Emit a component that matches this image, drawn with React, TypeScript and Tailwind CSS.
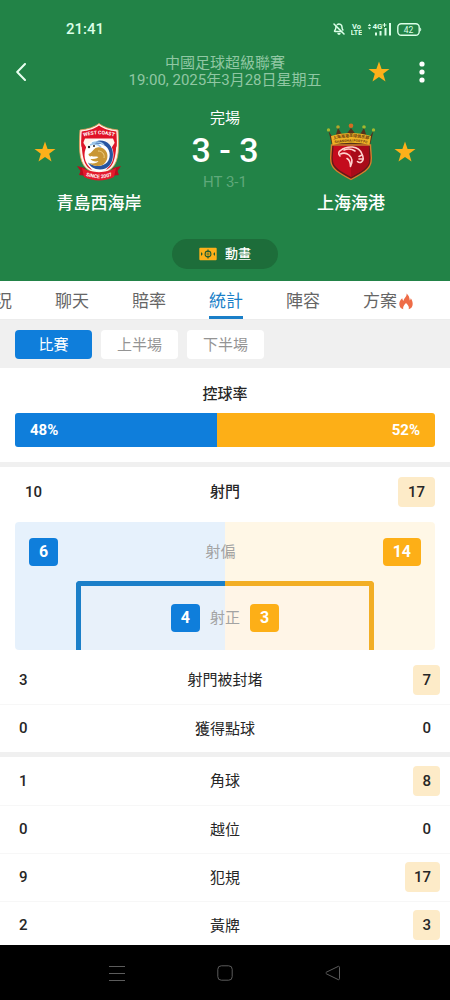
import { useState } from "react";
import { BellOff } from "lucide-react";
import clsx from "clsx";

interface Stat {
  label: string;
  home: number;
  away: number;
}

const TABS = ["賽況", "聊天", "賠率", "統計", "陣容", "方案"];
const PERIODS = ["比賽", "上半場", "下半場"];
const POSSESSION = { home: 48, away: 52 };

const SHOT_STATS: Stat[] = [
  { label: "射門被封堵", home: 3, away: 7 },
  { label: "獲得點球", home: 0, away: 0 },
];

const OTHER_STATS: Stat[] = [
  { label: "角球", home: 1, away: 8 },
  { label: "越位", home: 0, away: 0 },
  { label: "犯規", home: 9, away: 17 },
  { label: "黃牌", home: 2, away: 3 },
];

function StarIcon() {
  return (
    <svg viewBox="0 0 22 22" className="w-[22px] h-[22px]" fill="#fdb01a">
      <path d="M11 .6l2.6 7.3 7.9.2-6.3 4.7 2.3 7.6L11 15.9l-6.5 4.5 2.3-7.6L.5 8.1l7.9-.2z" />
    </svg>
  );
}

function FlameIcon() {
  return (
    <svg viewBox="0 0 14 17" className="w-[14px] h-[17px]" fill="#ee6c47">
      <path d="M7.600.400C8 2.500 6.500 4 5.300 5.700 4.700 6.500 4.500 7.300 4.500 8 3.800 7.300 3.300 6.400 3.200 5.200 1.300 6.900.300 8.800.300 10.900c0 2.600 1.500 4.600 4 5.400-.600-1.900.100-3.700 2.700-6.300 2.600 2.500 3.300 4.400 2.700 6.300 2.500-.800 4-2.800 4-5.400 0-2-.600-3.900-2-5.700-.100.900-.300 1.600-.900 2.200C10.600 4.700 9.700 2 7.600.400z" />
    </svg>
  );
}

function PitchIcon() {
  return (
    <svg viewBox="0 0 18 14" className="w-[18px] h-[14px]">
      <rect x=".3" y=".8" width="17.400" height="12.400" rx="1" fill="#fdb01a" />
      <g fill="none" stroke="#1f5c32" strokeWidth="1.100">
        <circle cx="9" cy="7" r="2.900" />
        <path d="M9 2.500v3M9 8.500v3M7.600 7h2.800" />
      </g>
      <path d="M2 5l1.800 2L2 9zM16 5l-1.800 2L16 9z" fill="#1f5c32" />
    </svg>
  );
}

function StatusIcons() {
  return (
    <div className="flex items-center gap-[5px] text-[#dcffe8]">
      <BellOff className="w-3 h-3 mr-px" strokeWidth={3} />
      <svg viewBox="0 0 11 14" className="w-[11px] h-[14px]" fill="currentColor">
        <text x="5.500" y="6.500" fontSize="7.500" fontWeight="700" textAnchor="middle">Vo</text>
        <text x="5.500" y="13.300" fontSize="7" fontWeight="700" textAnchor="middle">LTE</text>
      </svg>
      <svg viewBox="0 0 25 14" className="w-[25px] h-[14px]" fill="currentColor">
        <path d="M.8 4L2.500 1.800 4.200 4zM.8 5.500h3.400L2.500 7.500z" />
        <text x="5.500" y="6.500" fontSize="8" fontWeight="700">4G</text>
        <path d="M15.500 2.500h4v1h-4zM17 1h1v4h-1z" />
        <rect x="8" y="10.500" width="2" height="3" />
        <rect x="12.500" y="9" width="2" height="4.500" />
        <rect x="17.500" y="6" width="2" height="7.500" />
        <rect x="22" y="1" width="2" height="12.500" />
      </svg>
      <svg viewBox="0 0 25 13" className="w-[25px] h-[13px]">
        <rect x=".8" y=".8" width="21.400" height="11.400" rx="3.500" fill="none" stroke="currentColor" strokeWidth="1.400" />
        <path d="M23.200 4.500c1.400.6 1.400 3.400 0 4z" fill="currentColor" />
        <text x="11.500" y="9.500" fontSize="8.500" textAnchor="middle" fill="currentColor">42</text>
      </svg>
    </div>
  );
}

function WestCoastCrest() {
  return (
    <svg viewBox="0 0 46 58" className="w-[46px] h-[58px]">
      <path d="M23 .5c5 4 11 5.500 19 6.500 1 16 1.500 31-6 38-4 3.500-9 6-13 8-4-2-9-4.500-13-8C2.500 38 3 23 4 7 12 6 18 4.500 23 .5z" fill="#fff3ea" stroke="#e79a57" strokeWidth=".8" />
      <path d="M23 2.500c5 3.500 10 5 17.300 6 .5 6 .6 11 .3 16L37 15.500H9L5.400 24.500c-.3-5-.2-10 .3-16C13 7.500 18 6 23 2.500z" fill="#e01226" />
      <path d="M5.500 17L10 24c0 9 1 17 6 23-6-3-10-8-10.500-30zM40.500 17L36 24c0 9-1 17-6 23 6-3 10-8 10.500-30z" fill="#dd1528" />
      <ellipse cx="23" cy="32" rx="14.500" ry="16" fill="#fff" />
      <path d="M24 17.500c8 0 13 6 13 14 0 9-5 15-13 15-6 0-10-3-12-7 5 4 14 5 19 0 5-6 3-15-4-18-3-1-6-1-9 0 1-2 3-4 6-4z" fill="#2754a0" />
      <path d="M16 20c5-2 9-1 12 2M14 22c4-2 8-1 11 2" fill="none" stroke="#9cc6ea" strokeWidth="1.500" />
      <path d="M12.500 31c3-1 4-4 7-6 4-2 9 0 11 4s1 10-4 13c-5 2-10 1-13-2 4 1 8 0 9-2-3 1-7 0-8-2 3 0 6 0 8-2-3-1-5 0-7-1-1 1-3 0-3-2z" fill="#c99635" />
      <path d="M22 28c4 0 7 3 6 7" fill="none" stroke="#f0d083" />
      <circle cx="13" cy="24" r="1.200" fill="#222" />
      <circle cx="18" cy="23" r="1" fill="#222" />
      <path d="M1 43l8 2 2 8-8-1 1.500-4zM45 43l-8 2-2 8 8-1-1.500-4z" fill="#b80d1e" />
      <path d="M6 45c10 5.500 24 5.500 34 0l-2 9c-9 4.500-21 4.500-30 0z" fill="#e31a2c" />
      <path id="coast-top" d="M8 13.500Q23 9 38 13.500" fill="none" />
      <path id="coast-bottom" d="M9.500 52.500Q23 58 36.500 52.500" fill="none" />
      <text fontSize="5" fontWeight="700" fill="#fff" textAnchor="middle">
        <textPath href="#coast-top" startOffset="50%">WEST COAST</textPath>
      </text>
      <text fontSize="5" fontWeight="700" fill="#fff" textAnchor="middle">
        <textPath href="#coast-bottom" startOffset="50%">SINCE 2007</textPath>
      </text>
    </svg>
  );
}

function PortCrest() {
  return (
    <svg viewBox="0 0 50 58" className="w-[50px] h-[58px]">
      <circle cx="2.500" cy="7" r="1.700" fill="#a3b92f" />
      <circle cx="12" cy="4" r="1.800" fill="#b4a62c" />
      <circle cx="25" cy="2.800" r="2.300" fill="#d56b22" />
      <circle cx="38" cy="4" r="1.800" fill="#a3b92f" />
      <circle cx="47.500" cy="7" r="1.700" fill="#a3b92f" />
      <path d="M2.500 8l4 6 3-1 2.500-8 4 6.500 4.500-.5L25 5l4.500 6 4.500.5L38 5l2.500 8 3 1 4-6-4 16h-37z" fill="#55301a" />
      <path d="M5.500 22h39c0 7 1.500 11 .5 17-.8 7-8 11-20 17.500C13 50 5.800 46 5 39c-1-6 .5-10 .5-17z" fill="#65191a" stroke="#d97e2c" strokeWidth="1.400" />
      <path d="M7.500 23h35c0 6 1.300 10 .5 15-.6 6-7 10-18 16C14 48 7.600 44 7 38c-.8-5 .5-9 .5-15z" fill="#c40c1d" />
      <path d="M25 23h17.500c0 6 1.300 10 .5 15-.6 6-7 10-18 16z" fill="#a90b19" />
      <path d="M5 13c13-4 27-4 40 0l-1.500 9c-12-3-25-3-37 0z" fill="#eeb125" />
      <path id="port-top" d="M7 16.500Q25 12 43 16.500" fill="none" />
      <path id="port-bottom" d="M8 20.500Q25 17 42 20.500" fill="none" />
      <text fontSize="4" fontWeight="700" fill="#6b3d12" textAnchor="middle">
        <textPath href="#port-top" startOffset="50%">上海海港足球俱乐部</textPath>
      </text>
      <text fontSize="3.500" fontWeight="700" fill="#6b3d12" textAnchor="middle">
        <textPath href="#port-bottom" startOffset="50%">SHANGHAI PORT FC</textPath>
      </text>
      <g fill="none" stroke="#ffd3cf" strokeWidth="1.600" strokeLinecap="round" strokeLinejoin="round">
        <path d="M14 33c-2-2-1.500-4.500.500-5.500 3-2.500 7.500-3.800 12-3.500 4.500.500 8 3 9.500 7 1.500 3 1.800 6-.500 8-1.500.700-3 .500-4-.500" />
        <path d="M14.500 31c3-1.500 6-1 8.500 1 3.500 3 3.500 7.500 1.500 11.500 0-3.500-.800-6.500-3.500-8" />
        <path d="M18 27c4-1.500 8-1 11 1M36 32l-3 1.500M36.500 36l-3.500 0" />
      </g>
    </svg>
  );
}

interface TeamProps {
  name: string;
  crest: React.ReactNode;
  reverse?: boolean;
}

function Team({ name, crest, reverse }: TeamProps) {
  return (
    <div className={clsx("flex items-start pt-4", reverse && "flex-row-reverse")}>
      <button aria-label={`收藏 ${name}`} className="h-[58px] flex items-center">
        <StarIcon />
      </button>
      <div className="w-[86px] flex flex-col items-center gap-3">
        {crest}
        <h2 className="text-[17px] leading-5 font-medium whitespace-nowrap">{name}</h2>
      </div>
    </div>
  );
}

function StatTable({ stats }: { stats: Stat[] }) {
  return (
    <table className="w-full table-fixed text-[15px] leading-5">
      <tbody>
        {stats.map(({ label, home, away }) => (
          <tr key={label} className="h-12 border-b border-[#f7f7f7] last:border-b-0">
            <td className="pl-[19px] font-medium">{home}</td>
            <th scope="row" className="pt-px font-normal text-center">{label}</th>
            <td className="pr-[10px] text-right font-medium">
              <span
                className={clsx(
                  "inline-block px-[9px] py-[5px] rounded",
                  away > home && "bg-[#fdebc8]"
                )}
              >
                {away}
              </span>
            </td>
          </tr>
        ))}
      </tbody>
    </table>
  );
}

function ShotBadge({ value, away }: { value: number; away?: boolean }) {
  return (
    <span
      className={clsx(
        "h-7 px-[10px] rounded flex items-center text-base font-bold text-white",
        away ? "bg-[#fdaf17]" : "bg-[#0f7edb]"
      )}
    >
      {value}
    </span>
  );
}

export default function App() {
  const [tab, setTab] = useState("統計");
  const [period, setPeriod] = useState("比賽");

  return (
    <div
      lang="zh-Hant"
      className="h-screen flex flex-col overflow-hidden bg-white text-[#262626] font-['Roboto','Noto_Sans_CJK_TC',sans-serif]"
    >
      {/* Match header */}
      <header className="shrink-0 bg-[#228347] text-white pb-3">
        <div className="h-[54px] pt-1 pl-[66px] pr-7 flex items-center justify-between">
          <time className="text-[15px] leading-5 font-medium text-[#dcffe8]">21:41</time>
          <StatusIcons />
        </div>

        <div className="h-[35px] px-4 grid grid-cols-[80px_1fr_80px] items-center">
          <button aria-label="返回">
            <svg viewBox="0 0 10 18" className="w-[10px] h-[18px]" fill="none" stroke="#e8fff0" strokeWidth="2" strokeLinecap="round" strokeLinejoin="round">
              <path d="M9 1L1.200 9 9 17" />
            </svg>
          </button>
          <div className="justify-self-center text-center text-[15px] leading-[17px] text-[#90c7a3] whitespace-nowrap">
            <p>中國足球超級聯賽</p>
            <p>19:00, 2025年3月28日星期五</p>
          </div>
          <div className="pr-1 flex items-center justify-end gap-6">
            <button aria-label="收藏">
              <StarIcon />
            </button>
            <button aria-label="更多" className="w-4">
              <svg viewBox="0 0 16 24" className="w-4 h-6" fill="#fff">
                <circle cx="8" cy="4" r="2.600" />
                <circle cx="8" cy="12" r="2.600" />
                <circle cx="8" cy="20" r="2.600" />
              </svg>
            </button>
          </div>
        </div>

        <div className="pt-[18px] px-[34px] flex items-start justify-between">
          <Team name="青島西海岸" crest={<WestCoastCrest />} />
          <div className="pt-px text-center whitespace-nowrap">
            <p className="text-[15px] leading-5">完場</p>
            <p className="mt-[2px] text-[34px] leading-10 font-medium">3 - 3</p>
            <p className="mt-[2px] text-[15px] leading-5 text-[#5fa87a]">HT 3-1</p>
          </div>
          <Team name="上海海港" crest={<PortCrest />} reverse />
        </div>

        <button className="mt-[26px] mx-auto w-[106px] h-[30px] rounded-full bg-[#1d6d3a] flex items-center justify-center gap-2 text-[13px] font-medium">
          <PitchIcon />
          動畫
        </button>
      </header>

      {/* Tabs */}
      <nav className="shrink-0 h-[39px] overflow-hidden border-b border-[#ececec]">
        <div className="-ml-[22px] h-full flex gap-[43px]">
          {TABS.map((name) => (
            <button
              key={name}
              onClick={() => setTab(name)}
              className={clsx(
                "shrink-0 h-full pt-[5px] flex items-center gap-[2px] border-b-[3px] text-[17px] leading-5 whitespace-nowrap",
                name === tab
                  ? "text-[#1a7fc8] border-[#1a7fc8]"
                  : "text-[#666] border-transparent"
              )}
            >
              {name}
              {name === "方案" && <FlameIcon />}
            </button>
          ))}
        </div>
      </nav>

      <main className="flex-1 min-h-0 overflow-hidden">
        {/* Period filter */}
        <div className="h-12 px-[15px] flex items-center gap-[9px] bg-[#f0f0f0]">
          {PERIODS.map((name) => (
            <button
              key={name}
              onClick={() => setPeriod(name)}
              className={clsx(
                "w-[77px] h-[29px] pt-px rounded text-[15px] leading-5",
                name === period ? "bg-[#0f7edb] text-white" : "bg-white text-[#949494]"
              )}
            >
              {name}
            </button>
          ))}
        </div>

        {/* Possession */}
        <section className="px-[15px] pt-4 pb-[15px]">
          <h3 className="text-center text-[15px] leading-5 font-medium">控球率</h3>
          <div className="mt-[9px] h-[34px] rounded-[3px] overflow-hidden flex text-[15px] font-bold text-white">
            <div
              className="bg-[#0f7edb] px-[15px] flex items-center"
              style={{ width: `${POSSESSION.home}%` }}
            >
              {POSSESSION.home}%
            </div>
            <div className="flex-1 bg-[#fdaf17] px-[15px] flex items-center justify-end">
              {POSSESSION.away}%
            </div>
          </div>
        </section>

        {/* Shots */}
        <section className="border-t-[5px] border-[#f0f0f0]">
          <div className="h-[50px] px-[15px] grid grid-cols-3 items-center text-[15px] leading-5 font-medium">
            <span className="pl-[10px]">10</span>
            <h3 className="text-center">射門</h3>
            <span className="justify-self-end px-[10px] py-[5px] rounded bg-[#fdebc8]">17</span>
          </div>

          <div className="mt-[5px] mb-[6px] mx-[15px] rounded overflow-hidden bg-[linear-gradient(to_right,#e6f1fc_50%,#fff7e6_50%)] text-[15px] text-[#a3a3a3]">
            <div className="pt-4 px-[14px] flex items-center justify-between">
              <ShotBadge value={6} />
              射偏
              <ShotBadge value={14} away />
            </div>
            <div className="mt-[15px] mx-[61px] h-[69px] grid grid-cols-2">
              <div className="row-start-1 col-start-1 border-t-[5px] border-l-[5px] rounded-tl border-[#1b7fc8] bg-[#e8f1fa]" />
              <div className="row-start-1 col-start-2 border-t-[5px] border-r-[5px] rounded-tr border-[#f2ae25] bg-[#fff5e7]" />
              <div className="row-start-1 col-span-2 col-start-1 pt-[5px] flex items-center justify-center gap-[10px]">
                <ShotBadge value={4} />
                射正
                <ShotBadge value={3} away />
              </div>
            </div>
          </div>

          <StatTable stats={SHOT_STATS} />
        </section>

        <section className="border-t-[5px] border-[#f0f0f0]">
          <StatTable stats={OTHER_STATS} />
        </section>
      </main>

      {/* System navigation */}
      <footer className="shrink-0 h-[55px] px-[109px] bg-black text-[#5c5c5c] flex items-center justify-between">
        <button aria-label="最近">
          <svg viewBox="0 0 16 16" className="w-4 h-4" stroke="currentColor">
            <path d="M0 1.500h16M0 8.500h16M0 15.500h16" />
          </svg>
        </button>
        <button aria-label="主頁">
          <svg viewBox="0 0 16 16" className="w-4 h-4" fill="none" stroke="currentColor">
            <rect x=".8" y=".8" width="14.400" height="14.400" rx="3.500" />
          </svg>
        </button>
        <button aria-label="上一頁">
          <svg viewBox="0 0 16 16" className="w-4 h-4" fill="none" stroke="currentColor" strokeLinejoin="round">
            <path d="M14.500 2.300v11.400c0 .9-.8 1.300-1.500.8L1.500 8.900c-.8-.5-.8-1.300 0-1.800L13 1.500c.7-.5 1.500-.1 1.500.8z" />
          </svg>
        </button>
      </footer>
    </div>
  );
}
